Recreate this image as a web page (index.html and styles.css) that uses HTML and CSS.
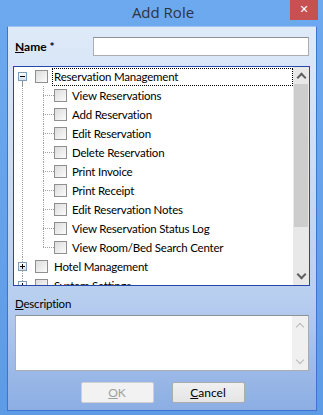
FILE: index.html
```html
<!DOCTYPE html>
<html lang="en">
<head>
    <meta charset="UTF-8">
    <title>Add Role</title>
    <link rel="stylesheet" href="styles.css">
</head>
<body>
    <div class="window">
        <div class="titlebar">
            <span class="title">Add Role</span>
            <span class="close">&#x2715;</span>
        </div>
        <div class="client">
            <div class="name-row">
                <label class="name-label"><u>N</u>ame *</label>
                <div class="textbox"></div>
            </div>

            <div class="tree">
                <div class="tree-list">
                    <div class="node root">
                        <span class="expander minus"></span>
                        <span class="check"></span>
                        <span class="text focused">Reservation Management</span>
                    </div>
                    <div class="children">
                        <div class="node child"><span class="branch"></span><span class="check"></span><span class="text">View Reservations</span></div>
                        <div class="node child"><span class="branch"></span><span class="check"></span><span class="text">Add Reservation</span></div>
                        <div class="node child"><span class="branch"></span><span class="check"></span><span class="text">Edit Reservation</span></div>
                        <div class="node child"><span class="branch"></span><span class="check"></span><span class="text">Delete Reservation</span></div>
                        <div class="node child"><span class="branch"></span><span class="check"></span><span class="text">Print Invoice</span></div>
                        <div class="node child"><span class="branch"></span><span class="check"></span><span class="text">Print Receipt</span></div>
                        <div class="node child"><span class="branch"></span><span class="check"></span><span class="text">Edit Reservation Notes</span></div>
                        <div class="node child"><span class="branch"></span><span class="check"></span><span class="text">View Reservation Status Log</span></div>
                        <div class="node child last"><span class="branch"></span><span class="check"></span><span class="text">View Room/Bed Search Center</span></div>
                    </div>
                    <div class="node root linked">
                        <span class="expander plus"></span>
                        <span class="check"></span>
                        <span class="text">Hotel Management</span>
                    </div>
                    <div class="node root linked">
                        <span class="expander plus"></span>
                        <span class="check"></span>
                        <span class="text">System Settings</span>
                    </div>
                </div>
                <div class="vscroll">
                    <span class="arrow up"></span>
                    <span class="thumb"></span>
                    <span class="track"></span>
                    <span class="arrow down"></span>
                </div>
            </div>

            <label class="desc-label"><u>D</u>escription</label>
            <div class="memo">
                <div class="memo-scroll">
                    <span class="arrow up light"></span>
                    <span class="track"></span>
                    <span class="arrow down light"></span>
                </div>
            </div>

            <div class="buttons">
                <button class="btn" disabled><u>O</u>K</button>
                <button class="btn"><u>C</u>ancel</button>
            </div>
        </div>
    </div>
</body>
</html>
```

FILE: styles.css
```css
body {
    margin: 0;
    font-family: Lato, "Open Sans", "DejaVu Sans", sans-serif;
    font-size: 11.5px;
    letter-spacing: -0.2px;
    color: #000;
    background: #6aa6ec;
}

.window {
    width: 323px;
    height: 415px;
    background: linear-gradient(#6da9ee, #5e9be6);
    display: flex;
    flex-direction: column;
    box-sizing: border-box;
    padding: 0 6px 4px 7px;
}

.titlebar {
    height: 26px;
    display: flex;
    align-items: flex-start;
    justify-content: center;
    position: relative;
    flex-shrink: 0;
}
.title {
    font-family: "Open Sans", "Noto Sans", sans-serif;
    font-size: 15px;
    letter-spacing: 0;
    line-height: 24px;
    color: #2e3440;
    margin-left: 2px;
}
.close {
    position: absolute;
    right: -1px;
    top: 0;
    width: 28px;
    height: 20px;
    background: #c75050;
    color: #fff;
    font-family: "DejaVu Sans", sans-serif;
    font-size: 11px;
    font-weight: bold;
    line-height: 20px;
    text-align: center;
}

.client {
    flex: 1;
    background: linear-gradient(#deeaf8, #b9cff0 70%, #8caee3);
    border: 1px solid #3c74cf;
    border-top-color: #9fc2f0;
    display: flex;
    flex-direction: column;
}

.name-row {
    display: flex;
    align-items: center;
    margin: 10px 0 0 7px;
    height: 19px;
}
.name-label {
    font-size: 12px;
    letter-spacing: 0;
    font-weight: bold;
    width: 78px;
}
.textbox {
    width: 216px;
    height: 19px;
    box-sizing: border-box;
    background: #fff;
    border: 1px solid #abadb3;
    border-top-color: #8e9097;
}

.tree {
    margin: 10px 0 0 5px;
    width: 297px;
    height: 220px;
    box-sizing: border-box;
    border: 1px solid #2548a6;
    background: #fff;
    display: flex;
    overflow: hidden;
}
.tree-list {
    flex: 1;
    overflow: hidden;
}
.node {
    height: 19px;
    display: flex;
    align-items: center;
    white-space: nowrap;
}
.root {
    padding-left: 4px;
}
.root:first-child {
    background: linear-gradient(#909090, #909090) 8px 14px / 1px 5px no-repeat;
}
.linked {
    background:
        repeating-linear-gradient(to bottom, #a0a0a0 0 1px, transparent 1px 2px) 8px 0 / 1px 100% no-repeat;
}
.expander {
    width: 9px;
    height: 9px;
    box-sizing: border-box;
    border: 1px solid #7f9db9;
    background: linear-gradient(#fff, #d6dfea);
    margin-right: 8px;
    flex-shrink: 0;
}
.minus {
    background:
        linear-gradient(#000, #000) center / 5px 1px no-repeat,
        linear-gradient(#fff, #d6dfea);
}
.plus {
    background:
        linear-gradient(#000, #000) center / 5px 1px no-repeat,
        linear-gradient(#000, #000) center / 1px 5px no-repeat,
        linear-gradient(#fff, #d6dfea);
}
.check {
    width: 13px;
    height: 13px;
    box-sizing: border-box;
    border: 1px solid #8f8f8f;
    background: linear-gradient(135deg, #dcdcdc, #fbfbfb);
    flex-shrink: 0;
}
.text {
    margin-left: 4px;
    line-height: 17px;
    padding: 0 2px;
}
.focused {
    flex: 1;
    margin-left: 4px;
    border: 1px dotted #000;
    line-height: 16px;
    padding-left: 1px;
}

.children {
    background: repeating-linear-gradient(to bottom, #a0a0a0 0 1px, transparent 1px 2px) 8px 0 / 1px 100% no-repeat;
}
.child {
    padding-left: 29px;
}
.branch {
    width: 11px;
    align-self: stretch;
    flex-shrink: 0;
    background:
        repeating-linear-gradient(to bottom, #a0a0a0 0 1px, transparent 1px 2px) 0 0 / 1px 100% no-repeat,
        repeating-linear-gradient(to right, #a0a0a0 0 1px, transparent 1px 2px) 0 9px / 100% 1px no-repeat;
}
.last .branch {
    background:
        repeating-linear-gradient(to bottom, #a0a0a0 0 1px, transparent 1px 2px) 0 0 / 1px 10px no-repeat,
        repeating-linear-gradient(to right, #a0a0a0 0 1px, transparent 1px 2px) 0 9px / 100% 1px no-repeat;
}
.child .text {
    margin-left: 3px;
}

.vscroll, .memo-scroll {
    width: 16px;
    background: #e8e8e8;
    display: flex;
    flex-direction: column;
    flex-shrink: 0;
}
.arrow {
    height: 17px;
    flex-shrink: 0;
    display: flex;
    align-items: center;
    justify-content: center;
}
.arrow::before {
    content: "";
    width: 5px;
    height: 5px;
    border-left: 2px solid #606060;
    border-top: 2px solid #606060;
}
.arrow.up::before {
    transform: translateY(2px) rotate(45deg);
}
.arrow.down::before {
    transform: translateY(-2px) rotate(225deg);
}
.arrow.light::before {
    border-color: #b8b8b8;
    border-width: 1px;
}
.thumb {
    height: 143px;
    background: #cdcdcd;
    margin: 0 1px;
}
.track {
    flex: 1;
}

.desc-label {
    margin: 10px 0 0 7px;
    line-height: 16px;
}
.memo {
    margin: 3px 0 0 7px;
    width: 294px;
    height: 56px;
    box-sizing: border-box;
    background: #fff;
    border: 1px solid #abadb3;
    border-top-color: #8e9097;
    display: flex;
    justify-content: flex-end;
}
.memo-scroll {
    background: #f0f0f0;
}

.buttons {
    display: flex;
    justify-content: center;
    gap: 18px;
    margin: 11px 0 0 1px;
}
.btn {
    width: 73px;
    height: 21px;
    font: inherit;
    font-size: 12px;
    letter-spacing: 0;
    padding: 0;
    border: 1px solid #acacac;
    border-radius: 2px;
    background: linear-gradient(#f0f0f0, #e5e5e5);
    color: #000;
}
.btn:disabled {
    border-color: #d0d0d0;
    background: #f2f2f2;
    color: #a0a0a0;
}
```
